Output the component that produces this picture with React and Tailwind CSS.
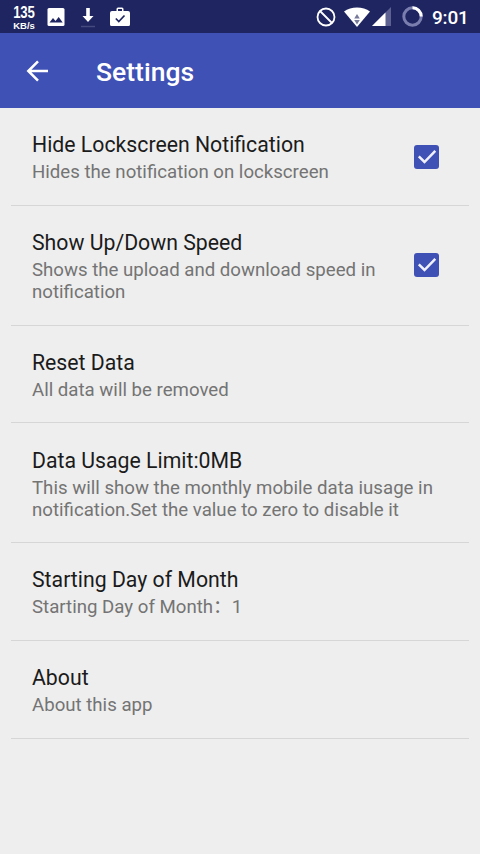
const settings = [
  { title: "Hide Lockscreen Notification", lines: ["Hides the notification on lockscreen"], checked: true },
  { title: "Show Up/Down Speed", lines: ["Shows the upload and download speed in", "notification"], checked: true },
  { title: "Reset Data", lines: ["All data will be removed"] },
  { title: "Data Usage Limit:0MB", lines: ["This will show the monthly mobile data iusage in", "notification.Set the value to zero to disable it"] },
  { title: "Starting Day of Month", lines: ["Starting Day of Month：1"] },
  { title: "About", lines: ["About this app"] },
];

function StatusBar() {
  return (
    <div className="flex h-[33px] items-center bg-[#1e2560] pl-[12px] pr-[11px] text-white">
      <div className="flex h-[28px] w-[24px] flex-col items-center pt-[2px] font-['Liberation_Sans',sans-serif] font-bold">
        <span className="scale-x-[0.82] text-[16px] leading-[16px] tracking-[-0.3px]">135</span>
        <span className="text-[9.5px] leading-[9px]">KB/s</span>
      </div>
      <svg className="ml-[11px] h-[18px] w-[18px]" viewBox="0 0 18 18">
        <rect x="0.5" width="17" height="18" rx="1.5" fill="#fff" />
        <path d="M2.5 14.5 6 10l2.5 3 3.2-4 4 5.5z" fill="#1e2560" />
      </svg>
      <svg className="ml-[15px] h-[22px] w-[16px]" viewBox="0 0 16 22">
        <path d="M6.2 2h3.6v8h3.7L8 16 2.5 10h3.7z" fill="#fff" />
        <path d="M1 20.5h14" stroke="#454b7e" strokeWidth="1.5" />
      </svg>
      <svg className="ml-[14px] h-[20px] w-[20px]" viewBox="0 0 20 20">
        <path fillRule="evenodd" d="M6.5 4V2Q6.5.5 8 .5h4q1.5 0 1.5 1.5v2H18q2 0 2 2v11.5q0 1.5-1.5 1.5h-17Q0 19 0 17.5V6q0-2 2-2zM8 4h4V2H8z" fill="#fff" />
        <path d="m5.8 11.5 3 3 5.7-6" fill="none" stroke="#1e2560" strokeWidth="1.7" />
      </svg>
      <svg className="ml-auto h-[20px] w-[20px]" viewBox="0 0 20 20" fill="none" stroke="#fff" strokeWidth="1.8">
        <circle cx="10" cy="10" r="8.5" />
        <path d="m4 4 12 12" />
      </svg>
      <svg className="ml-2 h-[20px] w-[26px]" viewBox="0 0 26 20">
        <path d="M0 4.5C7-.8 19-.8 26 4.5L13 20z" fill="#fff" />
        <path d="m13 7 2.8 4.5h-5.6zM10.2 13h5.6L13 17.500z" fill="#777b99" />
      </svg>
      <svg className="ml-[2px] h-[19px] w-[19px]" viewBox="0 0 19 19">
        <path d="M19 0v19H0z" fill="#5c6191" />
        <path d="M13.5 5.5V19H0z" fill="#fff" />
      </svg>
      <svg className="ml-[11px] h-[21px] w-[21px]" viewBox="0 0 21 21" fill="none" strokeWidth="3">
        <circle cx="10.5" cy="10.5" r="8.7" stroke="#7a7eaf" />
        <path d="M10.5 1.8a8.7 8.7 0 0 1 8.7 8.7" stroke="#fff" />
      </svg>
      <span className="ml-[9px] mt-[2px] w-[37px] whitespace-nowrap text-[19px] font-medium leading-none tracking-[-0.2px]">9:01</span>
    </div>
  );
}

function Checkbox() {
  return (
    <span role="checkbox" aria-checked="true" className="mb-[1px] mr-[30px] flex h-[24px] w-[25px] items-center justify-center rounded-[3px] bg-[#3f51b5]">
      <svg className="h-[24px] w-[24px]" viewBox="0 0 24 24" fill="none" stroke="#f0f1fb" strokeWidth="2.5">
        <path d="m3.8 11.3 5.7 5.7L20.3 5.8" />
      </svg>
    </span>
  );
}

export default function App() {
  return (
    <div className="flex h-[854px] w-[480px] flex-col overflow-hidden bg-[#eeeeee] font-[Roboto,'Noto_Sans_CJK_SC',sans-serif]">
      <StatusBar />
      <header className="flex h-[75px] items-center bg-[#3f51b5] pl-[26px] text-white">
        <svg className="h-[22px] w-[23px]" viewBox="0 0 23 22" fill="none" stroke="currentColor" strokeWidth="2.5">
          <path d="M22 11H2.5M12 1.3 2.3 11l9.7 9.7" />
        </svg>
        <h1 className="ml-[47px] mt-[3px] text-[26.5px] font-medium leading-none">Settings</h1>
      </header>
      <main className="flex flex-col px-[11px]">
        {settings.map(({ title, lines, checked }) => (
          <section key={title} className="flex items-center justify-between border-b border-[#d6d6d6] pb-[21.6px] pl-[21px] pt-[23.2px]">
            <div className="whitespace-nowrap">
              <h2 className="text-[21.25px] leading-[27px] text-[#1b1b1b]">{title}</h2>
              <div className="pt-[3px] text-[18.65px] leading-[22px] text-[#747474]">
                {lines.map((line) => <p key={line} className="h-[22px]">{line}</p>)}
              </div>
            </div>
            {checked && <Checkbox />}
          </section>
        ))}
      </main>
    </div>
  );
}
